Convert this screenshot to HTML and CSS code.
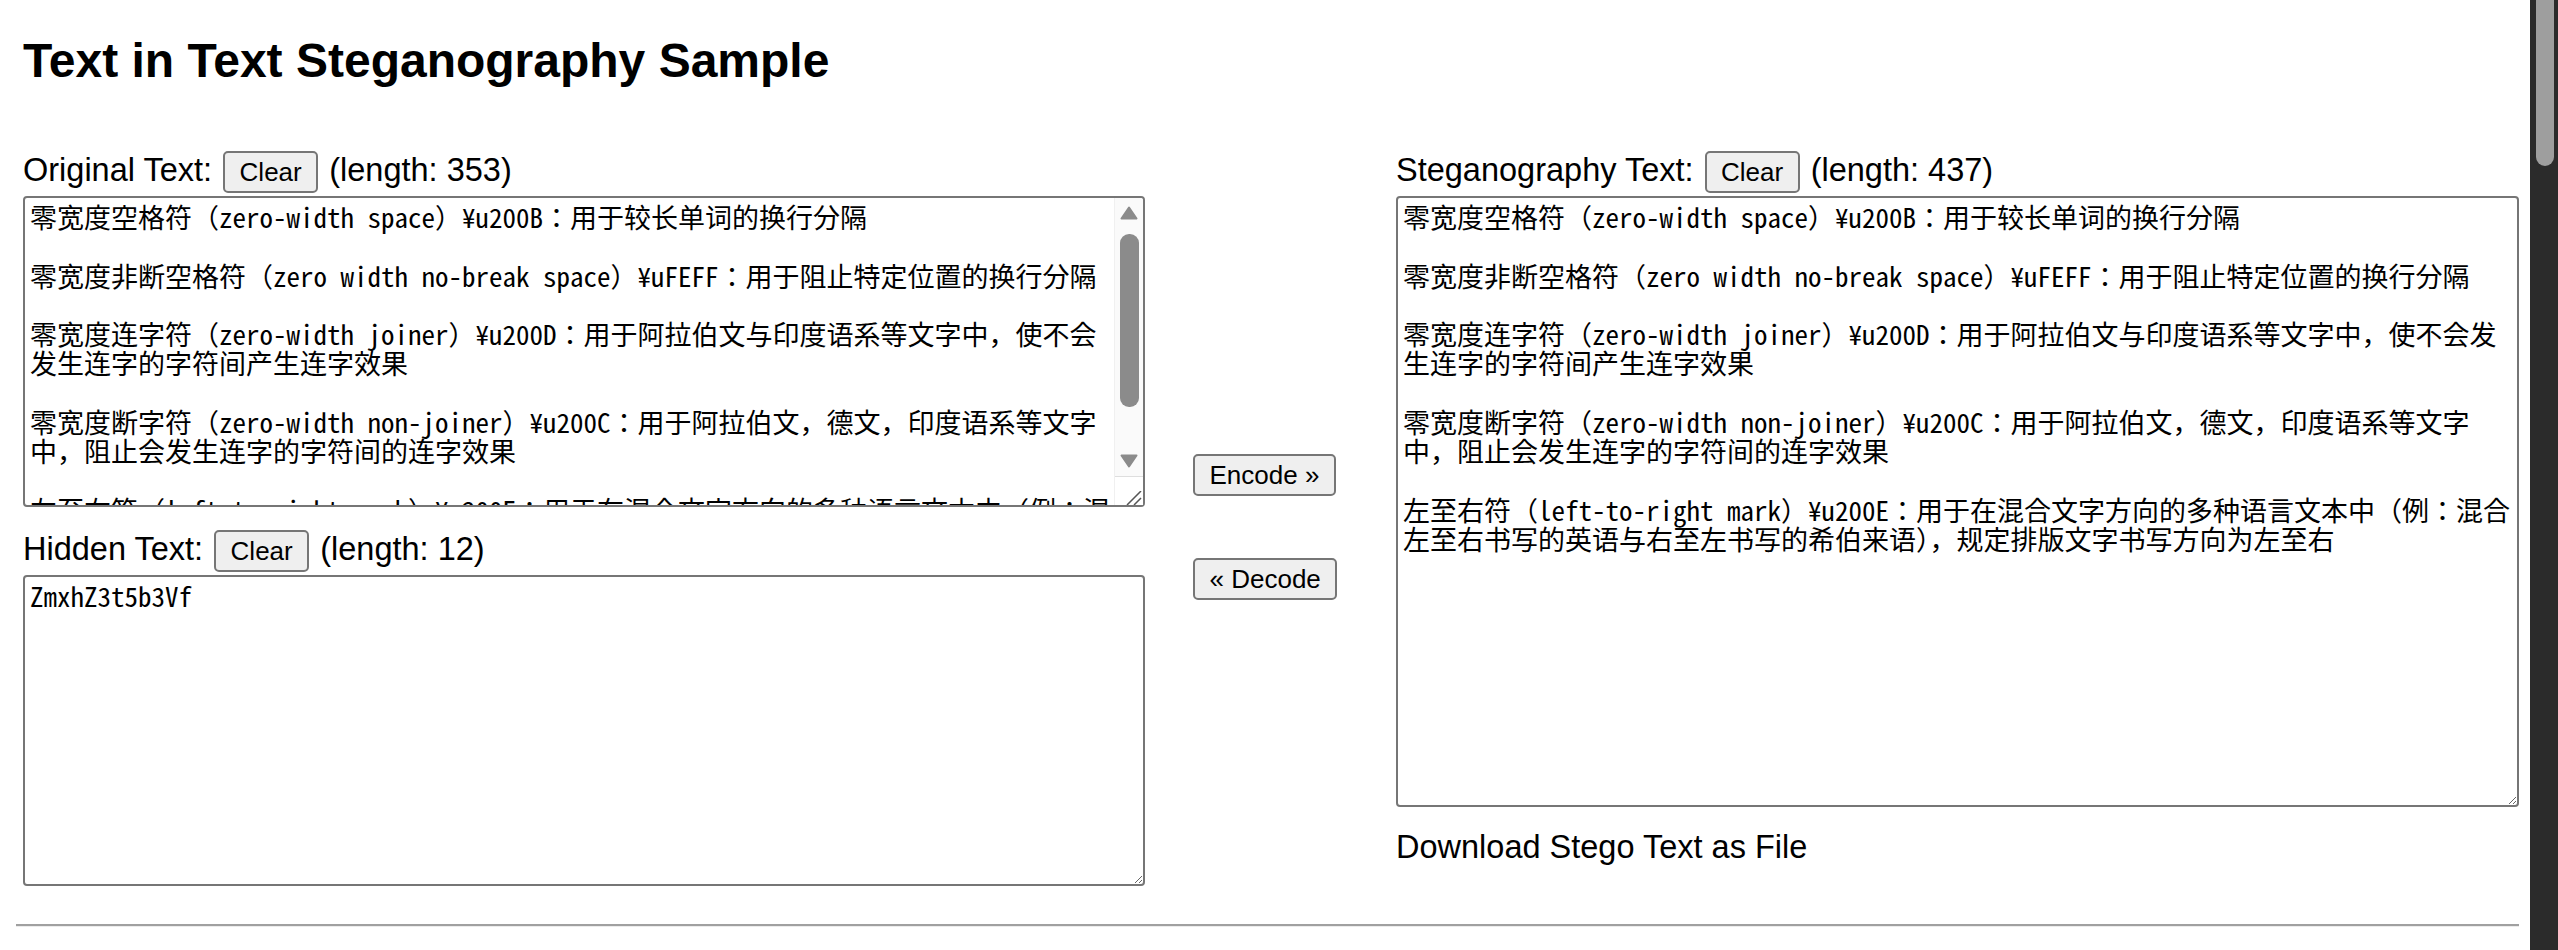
FILE: index.html
```html
<!DOCTYPE html>
<html lang="en">
<head>
    <meta charset="UTF-8">
    <meta http-equiv="X-UA-Compatible" content="IE=edge">
    <meta name="viewport" content="width=device-width, initial-scale=1.0">
    <title>Text in Text Steganography Sample</title>
    <link rel="stylesheet" href="styles.css">
</head>
<body>
    <h1>Text in Text Steganography Sample</h1>

    <div class="workspace">
        <div class="column column-left">
            <div class="field-head">
                <span>Original Text:</span>
                <button class="btn" data-target="original">Clear</button>
                <span>(length: 353)</span>
            </div>
            <div class="text-wrap">
                <textarea id="original" class="text-box text-box-short text-box-scroll">零宽度空格符（zero-width space）¥u200B：用于较长单词的换行分隔

零宽度非断空格符（zero width no-break space）¥uFEFF：用于阻止特定位置的换行分隔

零宽度连字符（zero-width joiner）¥u200D：用于阿拉伯文与印度语系等文字中，使不会发生连字的字符间产生连字效果

零宽度断字符（zero-width non-joiner）¥u200C：用于阿拉伯文，德文，印度语系等文字中，阻止会发生连字的字符间的连字效果

左至右符（left-to-right mark）¥u200E：用于在混合文字方向的多种语言文本中（例：混合左至右书写的英语与右至左书写的希伯来语），规定排版文字书写方向为左至右</textarea>
                <!-- scroll rail drawn over the textarea -->
                <div class="scroll-rail" aria-hidden="true">
                    <div class="rail-btn">
                        <svg width="18" height="14" viewBox="0 0 18 14"><path d="M9 1.5 16.5 12.5H1.5z" fill="#8b8b8b" stroke="#8b8b8b" stroke-width="2" stroke-linejoin="round"/></svg>
                    </div>
                    <div class="rail-track">
                        <div class="rail-thumb"></div>
                    </div>
                    <div class="rail-btn">
                        <svg width="18" height="14" viewBox="0 0 18 14"><path d="M1.5 1.5H16.5L9 12.5z" fill="#8b8b8b" stroke="#8b8b8b" stroke-width="2" stroke-linejoin="round"/></svg>
                    </div>
                    <div class="rail-corner">
                        <svg width="16" height="14" viewBox="0 0 16 14"><path d="M1 14 15 0M8 14 15 7" stroke="#555" stroke-width="1.5"/></svg>
                    </div>
                </div>
            </div>

            <div class="field-head">
                <span>Hidden Text:</span>
                <button class="btn" data-target="hidden">Clear</button>
                <span>(length: 12)</span>
            </div>
            <textarea id="hidden" class="text-box text-box-short">ZmxhZ3t5b3Vf</textarea>
        </div>

        <div class="actions">
            <button class="btn" id="encode">Encode »</button>
            <button class="btn" id="decode">« Decode</button>
        </div>

        <div class="column column-right">
            <div class="field-head">
                <span>Steganography Text:</span>
                <button class="btn" data-target="stego">Clear</button>
                <span>(length: 437)</span>
            </div>
            <textarea id="stego" class="text-box text-box-tall">零宽度空格符（zero-width space）¥u200B：用于较长单词的换行分隔

零宽度非断空格符（zero width no-break space）¥uFEFF：用于阻止特定位置的换行分隔

零宽度连字符（zero-width joiner）¥u200D：用于阿拉伯文与印度语系等文字中，使不会发生连字的字符间产生连字效果

零宽度断字符（zero-width non-joiner）¥u200C：用于阿拉伯文，德文，印度语系等文字中，阻止会发生连字的字符间的连字效果

左至右符（left-to-right mark）¥u200E：用于在混合文字方向的多种语言文本中（例：混合左至右书写的英语与右至左书写的希伯来语），规定排版文字书写方向为左至右</textarea>
            <a class="download-link" id="download">Download Stego Text as File</a>
        </div>
    </div>

    <hr>

    <div class="page-scrollbar" aria-hidden="true">
        <div class="page-thumb"></div>
    </div>
</body>
</html>
```

FILE: styles.css
```css
body {
    margin: 0 39px 0 16px;
    font-family: "Liberation Sans", "Noto Sans CJK JP", sans-serif;
    font-size: 32.5px;
    color: #000;
    background: #fff;
}

h1 {
    margin: 33px 0 63px 7px;
    font-size: 48px;
    font-weight: bold;
}

.workspace {
    display: flex;
    align-items: flex-start;
    padding-left: 7px;
}

.column {
    display: flex;
    flex-direction: column;
    align-items: flex-start;
}

.column-left {
    width: 1122px;
}

.column-right {
    width: 1123px;
}

.actions {
    width: 251px;
    box-sizing: border-box;
    padding: 303px 0 0 48px;
    display: flex;
    flex-direction: column;
    align-items: flex-start;
    gap: 62px;
}

.field-head {
    display: flex;
    align-items: baseline;
    gap: 11px;
}

.btn {
    margin: 0;
    font-family: "Liberation Sans", sans-serif;
    font-size: 26px;
    line-height: 29px;
    padding: 4.5px 14.5px;
    border: 2px solid #767676;
    border-radius: 5px;
    background-color: #efefef;
    color: #000;
    cursor: pointer;
}

.text-wrap {
    position: relative;
    width: 100%;
    margin-top: 3px;
}

.text-box {
    display: block;
    box-sizing: border-box;
    width: 100%;
    margin: 3px 0 0;
    padding: 4px 4px 4px 5px;
    border: 2px solid #767676;
    border-radius: 4px;
    font-family: "Noto Sans Mono CJK JP", "Noto Sans CJK JP", monospace;
    font-size: 27px;
    line-height: 29.3px;
    color: #000;
    background: #fff;
    overflow: hidden;
}

.text-wrap .text-box {
    margin: 0;
}

.text-box-short {
    height: 311px;
}

.text-box-tall {
    height: 611px;
}

.text-box-scroll {
    padding-right: 32px;
    resize: none;
}

.text-box + .field-head,
.text-wrap + .field-head {
    margin-top: 23px;
}

.scroll-rail {
    position: absolute;
    top: 2px;
    right: 2px;
    bottom: 2px;
    width: 28px;
    display: flex;
    flex-direction: column;
    background: #fafafa;
    border-left: 1px solid #f0f0f0;
    border-radius: 0 3px 3px 0;
}

.rail-btn {
    height: 30px;
    display: flex;
    align-items: center;
    padding-left: 5px;
}

.rail-track {
    flex: 1;
    padding: 6px 4px 0 5px;
}

.rail-thumb {
    height: 173px;
    border-radius: 9px;
    background: #8b8b8b;
}

.rail-corner {
    height: 29px;
    box-sizing: border-box;
    border-top: 1px solid #dedede;
    background: #fff;
    display: flex;
    align-items: flex-end;
    justify-content: flex-end;
    padding-right: 1px;
}

.rail-corner svg {
    display: block;
}

.download-link {
    margin-top: 22px;
    color: #000;
}

hr {
    margin: 38px 0 0;
    height: 0;
    border: 0;
    border-top: 2px solid #a0a0a0;
    border-bottom: 1px solid #ececec;
}

.page-scrollbar {
    position: fixed;
    top: 0;
    right: 0;
    width: 28px;
    height: 100vh;
    background: #2b2b2b;
}

.page-thumb {
    margin: 0 4px 0 6px;
    height: 166px;
    border-radius: 0 0 9px 9px;
    background: #9e9e9e;
}
```
